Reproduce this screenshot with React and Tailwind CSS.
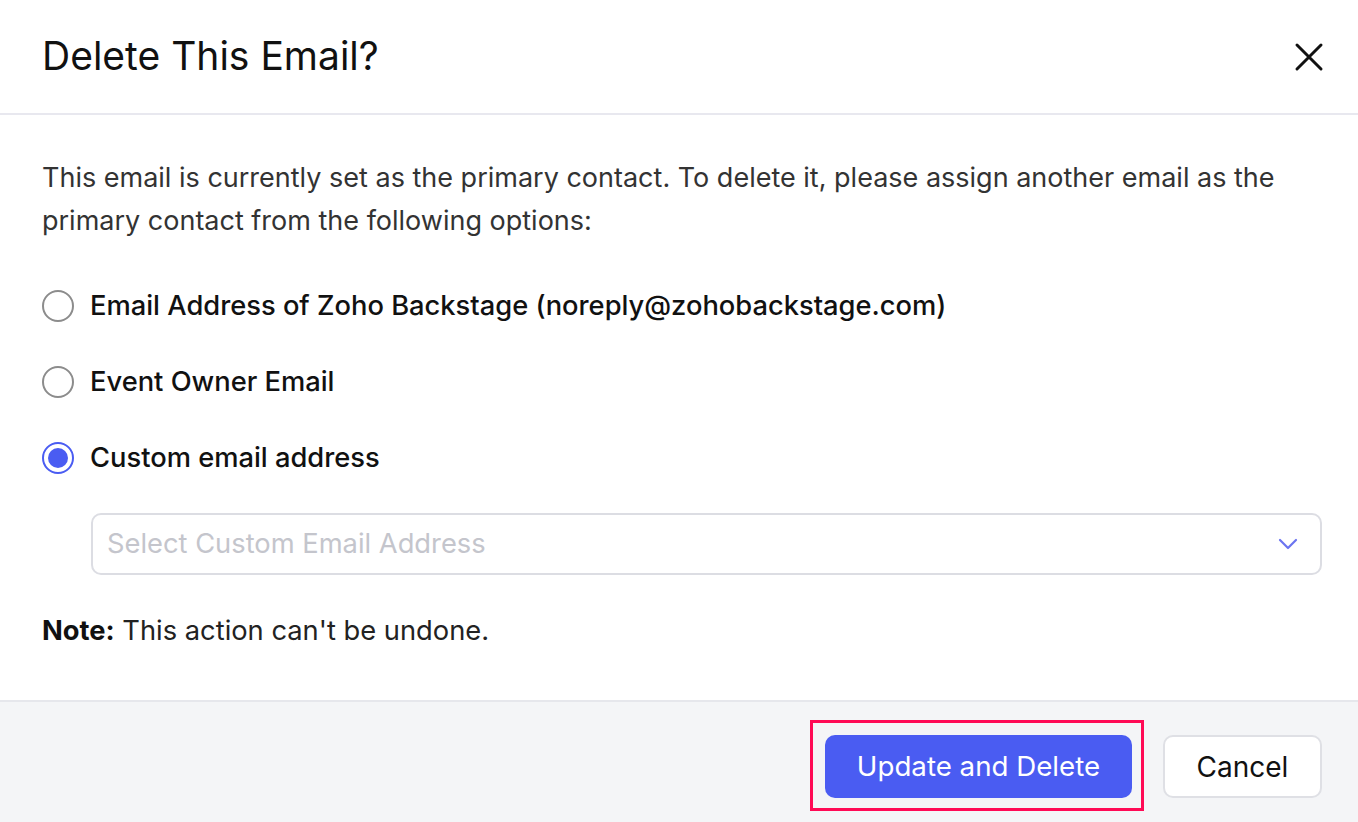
import React from "react";

function Radio({ checked }) {
  return checked ? (
    <span className="flex h-[32px] w-[32px] shrink-0 items-center justify-center rounded-full border-[2px] border-[#4a5cf2] bg-white">
      <span className="h-[20px] w-[20px] rounded-full bg-[#4a5cf2]" />
    </span>
  ) : (
    <span className="h-[32px] w-[32px] shrink-0 rounded-full border-[2px] border-[#8c8c8c] bg-white" />
  );
}

export default function App() {
  const font = { fontFamily: "Inter, 'Open Sans', sans-serif" };
  return (
    <div className="flex h-[822px] w-[1358px] flex-col overflow-hidden bg-white" style={font}>
      <div className="flex h-[115px] shrink-0 items-center justify-between border-b-[2px] border-[#e8e8ef] pl-[42px] pr-[34px]">
        <h1 className="text-[39px] font-normal text-[#111]">Delete This Email?</h1>
        <svg width="30" height="30" viewBox="0 0 30 30" className="mt-[1px]">
          <path d="M3 3 L27 27 M27 3 L3 27" stroke="#111" strokeWidth="3" strokeLinecap="round" />
        </svg>
      </div>

      <div className="flex flex-1 flex-col pl-[42px] pr-[36px] pt-[41px]">
        <p className="text-[27px] leading-[43px] text-[#333]">
          This email is currently set as the primary contact. To delete it, please assign another email as the primary contact from the following options:
        </p>
        <div className="mt-[42px] flex flex-col gap-[32px]">
          <label className="flex h-[44px] items-center gap-[16px]">
            <Radio />
            <span className="text-[27.3px] font-medium text-[#111]">Email Address of Zoho Backstage (noreply@zohobackstage.com)</span>
          </label>
          <label className="flex h-[44px] items-center gap-[16px]">
            <Radio />
            <span className="text-[27.3px] font-medium text-[#111]">Event Owner Email</span>
          </label>
          <label className="flex h-[44px] items-center gap-[16px]">
            <Radio checked />
            <span className="text-[27.3px] font-medium text-[#111]">Custom email address</span>
          </label>
        </div>
        <div className="ml-[49px] mt-[33px] flex h-[62px] items-center justify-between rounded-[10px] border-[2px] border-[#dcdde3] pl-[14px] pr-[22px]">
          <span className="text-[27.3px] text-[#c4c5cc]">Select Custom Email Address</span>
          <svg width="20" height="12" viewBox="0 0 20 12">
            <path d="M2 2 L10 10 L18 2" fill="none" stroke="#6b74f0" strokeWidth="2.2" strokeLinecap="round" strokeLinejoin="round" />
          </svg>
        </div>
        <p className="mt-[36px] text-[27.3px] text-[#222]">
          <span className="font-bold text-[#111]">Note:</span> This action can't be undone.
        </p>
      </div>

      <div className="flex h-[122px] shrink-0 items-start justify-end gap-[31px] border-t-[2px] border-[#e6e7ec] bg-[#f4f5f7] pr-[36px] pt-[33px]">
        <div className="relative">
          <button className="flex h-[63px] w-[307px] items-center justify-center rounded-[10px] bg-[#4a5cf2] text-[27.7px] text-white">
            Update and Delete
          </button>
          <div className="pointer-events-none absolute -bottom-[13px] -left-[15px] -right-[12px] -top-[15px] border-[3px] border-[#ff0a55]" />
        </div>
        <button className="flex h-[63px] w-[159px] items-center justify-center rounded-[10px] border-[2px] border-[#dfe0e5] bg-white text-[28px] text-[#111]">
          Cancel
        </button>
      </div>
    </div>
  );
}
